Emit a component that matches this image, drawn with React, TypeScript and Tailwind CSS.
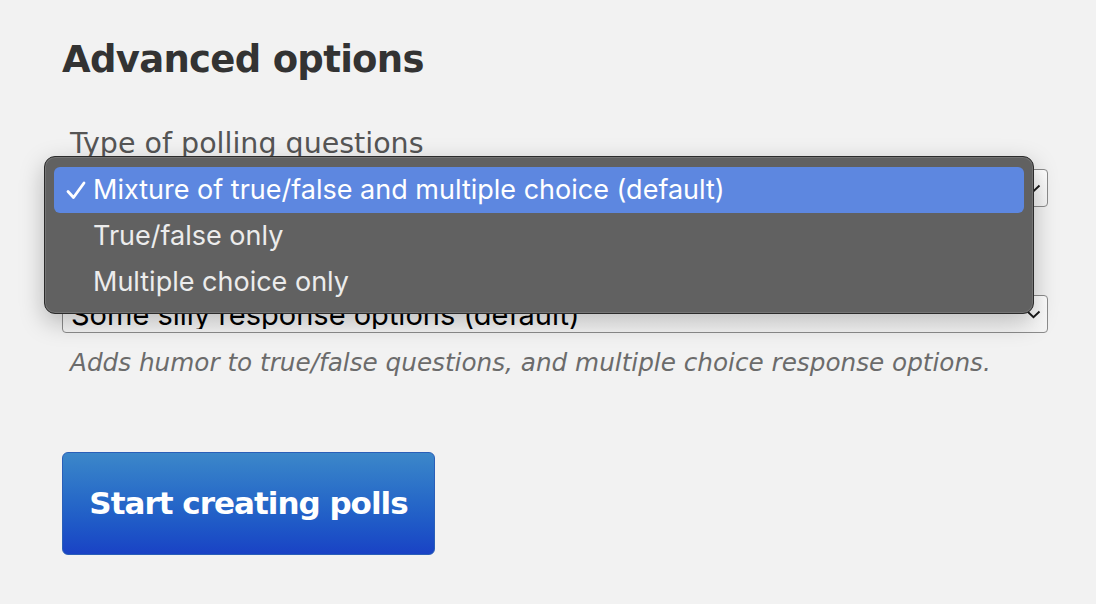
import React from "react";

const lucida = { fontFamily: '"DejaVu Sans", "Liberation Sans", sans-serif' };
const system = { fontFamily: 'Inter, "Open Sans", sans-serif' };

const Chevron: React.FC = () => (
  <svg width="15" height="9" viewBox="0 0 15 9" className="shrink-0">
    <path d="M1.5 1.5 L7.5 7.3 L13.5 1.5" fill="none" stroke="#1a1a1a" strokeWidth="1.9" />
  </svg>
);

const Check: React.FC = () => (
  <svg width="20" height="19" viewBox="0 0 20 19" className="shrink-0">
    <path d="M2 10.5 L7.5 16.5 L18 2" fill="none" stroke="#fff" strokeWidth="2.8" strokeLinecap="round" strokeLinejoin="round" />
  </svg>
);

const FakeSelect: React.FC<{ value: string }> = ({ value }) => (
  <div
    className="flex h-[38px] items-center justify-between rounded-[4px] border border-[#8c8c8c] bg-gradient-to-b from-white to-[#f4f4f4] pl-2 pr-[6px] text-[29px] leading-none text-black"
    style={system}
  >
    <span className="truncate">{value}</span>
    <Chevron />
  </div>
);

const options = [
  { label: "Mixture of true/false and multiple choice (default)", selected: true },
  { label: "True/false only", selected: false },
  { label: "Multiple choice only", selected: false },
];

export default function App() {
  return (
    <div className="relative min-h-screen bg-[#f2f2f2] pl-[62px] pr-[48px] pt-[36px] text-[#333]" style={lucida}>
      <h2 className="text-[37px] font-bold leading-[48px] tracking-[-0.7px]">Advanced options</h2>

      <div className="mt-[42px]">
        <label className="mb-[7px] block pl-2 text-[28.5px] leading-[36px] text-[#555]">Type of polling questions</label>
        <FakeSelect value="Mixture of true/false and multiple choice (default)" />
      </div>

      <div className="mt-[20px]">
        <label className="block pl-2 text-[28px] leading-[36px] text-[#555]">Humor level</label>
        <div className="mt-[32px]">
          <FakeSelect value="Some silly response options (default)" />
        </div>
        <p className="mt-[15px] pl-2 text-[24.7px] italic leading-[30px] text-[#6b6b6b]">
          Adds humor to true/false questions, and multiple choice response options.
        </p>
      </div>

      <button
        type="button"
        className="mt-[74px] flex h-[103px] w-[373px] items-center justify-center rounded-[6px] border border-[#2a5fb8] bg-gradient-to-b from-[#3c87c9] to-[#1a42c5] text-[31px] font-bold tracking-[-1px] text-white"
        style={lucida}
      >
        Start creating polls
      </button>

      {/* open dropdown menu */}
      <div
        className="absolute left-[44px] top-[156px] w-[990px] rounded-[11px] border border-[#2b2b2b] bg-[#616161] px-[9px] pb-[8px] pt-[10px] shadow-[0_8px_24px_rgba(0,0,0,0.25),inset_0_0_0_1px_rgba(255,255,255,0.12)]"
        style={system}
      >
        {options.map((o) => (
          <div
            key={o.label}
            className={`flex h-[46px] items-center rounded-[6px] text-[27px] ${
              o.selected ? "bg-[#5d87e0] text-white" : "text-[#ececec]"
            }`}
          >
            <span className="flex w-[39px] justify-center pl-[4px]">{o.selected ? <Check /> : null}</span>
            <span>{o.label}</span>
          </div>
        ))}
      </div>
    </div>
  );
}
